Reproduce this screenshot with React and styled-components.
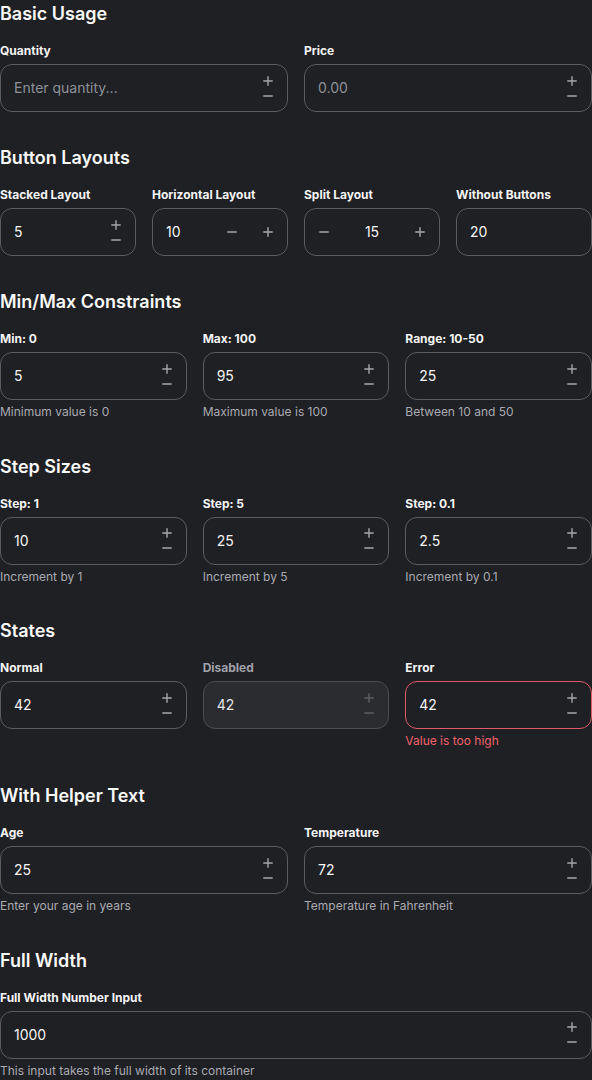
import styled, { createGlobalStyle, css } from "styled-components";
import { useState } from "react";

const GlobalStyle = createGlobalStyle`
    body {
        margin: 0;
        background: #1f2023;
        font-family: Inter, "Noto Sans", sans-serif;
        color: #f4f4f5;
    }
`

// little plus / minus glyphs drawn as strokes
const PlusIcon = ({ size = 10 }) => (
    <svg width={size} height={size} viewBox="0 0 10 10" fill="none" stroke="currentColor" strokeWidth="1.4" strokeLinecap="round">
        <path d="M5 0.8v8.4M0.8 5h8.4" />
    </svg>
)
const MinusIcon = ({ size = 10 }) => (
    <svg width={size} height={size} viewBox="0 0 10 10" fill="none" stroke="currentColor" strokeWidth="1.4" strokeLinecap="round">
        <path d="M0.8 5h8.4" />
    </svg>
)

// number field with 4 possible button layouts: stacked, horizontal, split, none
const NumberInput = ({ value, placeholder, layout = "stacked", disabled, error, step = 1 }) => {
    const [val, setVal] = useState(value ?? "");
    const decimals = String(step).split(".")[1]?.length || 0;
    const bump = (dir) => {
        if (disabled) return;
        const next = (parseFloat(val || 0) + dir * step).toFixed(decimals);
        setVal(next);
    };
    const minus = (
        <StepButton type="button" $wide={layout !== "stacked"} onClick={() => bump(-1)} disabled={disabled}>
            <MinusIcon />
        </StepButton>
    );
    const plus = (
        <StepButton type="button" $wide={layout !== "stacked"} onClick={() => bump(1)} disabled={disabled}>
            <PlusIcon />
        </StepButton>
    );
    return (
        <Box $disabled={disabled} $error={error} $layout={layout}>
            {layout === "split" && minus}
            <Field
                value={val}
                placeholder={placeholder}
                disabled={disabled}
                $center={layout === "split"}
                onChange={(e) => setVal(e.target.value)}
            />
            {layout === "stacked" && (
                <Stack>
                    {plus}
                    {minus}
                </Stack>
            )}
            {layout === "horizontal" && (
                <Row>
                    {minus}
                    {plus}
                </Row>
            )}
            {layout === "split" && plus}
        </Box>
    );
}

const Item = ({ label, helper, error, disabled, ...rest }) => (
    <Cell>
        <Label $disabled={disabled}>{label}</Label>
        <NumberInput error={error} disabled={disabled} {...rest} />
        {helper && <Helper $error={error}>{helper}</Helper>}
    </Cell>
)

const App = () => {
    return (
        <Page>
            <GlobalStyle />
            <Section>
                <Title>Basic Usage</Title>
                <Grid $cols={2}>
                    <Item label="Quantity" placeholder="Enter quantity..." />
                    <Item label="Price" placeholder="0.00" step={0.01} />
                </Grid>
            </Section>
            <Section>
                <Title>Button Layouts</Title>
                <Grid $cols={4}>
                    <Item label="Stacked Layout" value="5" />
                    <Item label="Horizontal Layout" value="10" layout="horizontal" />
                    <Item label="Split Layout" value="15" layout="split" />
                    <Item label="Without Buttons" value="20" layout="none" />
                </Grid>
            </Section>
            <Section>
                <Title>Min/Max Constraints</Title>
                <Grid $cols={3}>
                    <Item label="Min: 0" value="5" helper="Minimum value is 0" />
                    <Item label="Max: 100" value="95" helper="Maximum value is 100" />
                    <Item label="Range: 10-50" value="25" helper="Between 10 and 50" />
                </Grid>
            </Section>
            <Section>
                <Title>Step Sizes</Title>
                <Grid $cols={3}>
                    <Item label="Step: 1" value="10" helper="Increment by 1" />
                    <Item label="Step: 5" value="25" step={5} helper="Increment by 5" />
                    <Item label="Step: 0.1" value="2.5" step={0.1} helper="Increment by 0.1" />
                </Grid>
            </Section>
            <Section>
                <Title>States</Title>
                <Grid $cols={3}>
                    <Item label="Normal" value="42" />
                    <Item label="Disabled" value="42" disabled />
                    <Item label="Error" value="42" error helper="Value is too high" />
                </Grid>
            </Section>
            <Section>
                <Title>With Helper Text</Title>
                <Grid $cols={2}>
                    <Item label="Age" value="25" helper="Enter your age in years" />
                    <Item label="Temperature" value="72" helper="Temperature in Fahrenheit" />
                </Grid>
            </Section>
            <Section>
                <Title>Full Width</Title>
                <Item label="Full Width Number Input" value="1000" helper="This input takes the full width of its container" />
            </Section>
        </Page>
    )
}

const Page = styled.div`
    width: 592px;
    display: flex;
    flex-direction: column;
    gap: 32px;
`
const Section = styled.section`
    display: flex;
    flex-direction: column;
`
const Title = styled.h2`
    margin: 0 0 14px;
    font-size: 18px;
    line-height: 28px;
    font-weight: 600;
    color: #fafafa;
`
const Grid = styled.div`
    display: grid;
    grid-template-columns: repeat(${(p) => p.$cols}, minmax(0, 1fr));
    column-gap: 16px;
    align-items: start;
`
const Cell = styled.div`
    min-width: 0;
`
const Label = styled.label`
    display: block;
    font-size: 12px;
    line-height: 16px;
    font-weight: 700;
    padding-top: 1px;
    margin-bottom: 5px;
    color: ${(p) => (p.$disabled ? "#a1a1aa" : "#f4f4f5")};
`
const Helper = styled.div`
    margin-top: 4px;
    font-size: 12px;
    line-height: 16.7px;
    color: ${(p) => (p.$error ? "#f0606b" : "#a9a9b0")};
`
const Box = styled.div`
    height: 48px;
    box-sizing: border-box;
    display: flex;
    align-items: center;
    border: 1px solid ${(p) => (p.$error ? "#e0596a" : p.$disabled ? "#4b4c52" : "#5b5c62")};
    border-radius: 12px;
    background: ${(p) => (p.$disabled ? "#2b2c30" : "#1f2023")};
    padding: 0 11px 0 13px;
    ${(p) =>
        (p.$layout === "split" || p.$layout === "horizontal") &&
        css`
            padding-right: 7px;
        `}
    ${(p) =>
        p.$layout === "split" &&
        css`
            padding-left: 7px;
        `}
`
const Field = styled.input`
    flex: 1;
    width: 0;
    min-width: 0;
    border: none;
    outline: none;
    background: transparent;
    font-family: inherit;
    font-size: 14px;
    color: #f4f4f5;
    padding: 0 0 1px;
    text-align: ${(p) => (p.$center ? "center" : "left")};
    &::placeholder {
        color: #8e9097;
    }
    &:disabled {
        color: #e4e4e7;
    }
`
const Stack = styled.div`
    display: flex;
    flex-direction: column;
`
const Row = styled.div`
    display: flex;
    gap: 12px;
`
const StepButton = styled.button`
    display: flex;
    align-items: center;
    justify-content: center;
    width: ${(p) => (p.$wide ? "24px" : "16px")};
    height: ${(p) => (p.$wide ? "24px" : "15px")};
    padding: 0;
    border: none;
    background: transparent;
    color: #a4a6ad;
    cursor: pointer;
    &:disabled {
        color: #5c5e64;
        cursor: default;
    }
`

export default App;
